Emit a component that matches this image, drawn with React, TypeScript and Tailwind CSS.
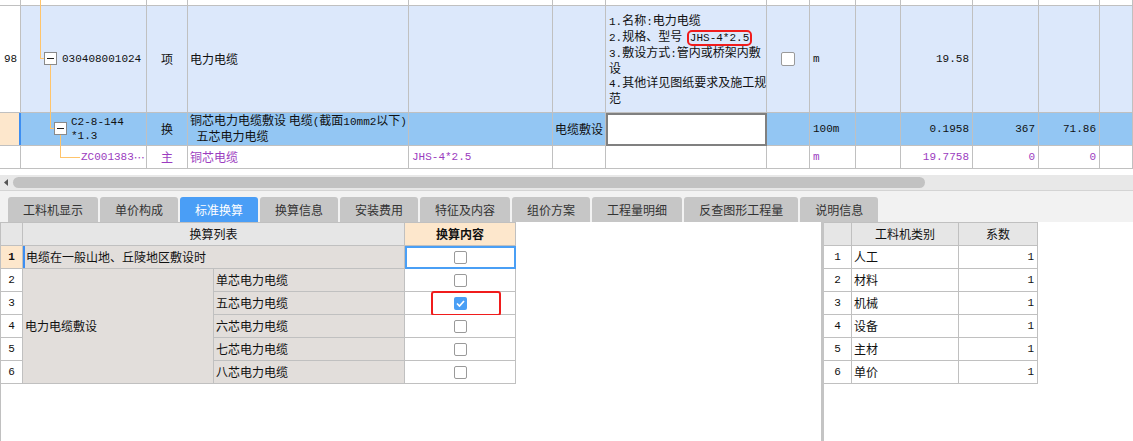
import React from "react";

// grid line colour and a few palette values used throughout
const LINE = "border-[#c0c0c0]";

const M = ({ children, className = "" }: { children: React.ReactNode; className?: string }) => (
  <span className={`font-['Liberation_Mono',monospace] text-[11px] ${className}`}>{children}</span>
);

const Check = ({ checked = false }: { checked?: boolean }) =>
  checked ? (
    <span className="flex h-[13px] w-[13px] items-center justify-center rounded-[2px] bg-[#4a9ff5]">
      <svg width="9" height="7" viewBox="0 0 9 7">
        <path d="M1 3.5 L3.5 6 L8 1" stroke="#fff" strokeWidth="1.7" fill="none" />
      </svg>
    </span>
  ) : (
    <span className="h-[13px] w-[13px] rounded-[2px] border border-[#9a9a9a] bg-white" />
  );

// plain grid cell with right/bottom grid lines
const C = ({ children, className = "" }: { children?: React.ReactNode; className?: string }) => (
  <div className={`flex items-center whitespace-nowrap border-r border-b ${LINE} ${className}`}>{children}</div>
);

// cell with its own full border (focus / edit state)
const F = ({ children, className = "" }: { children?: React.ReactNode; className?: string }) => (
  <div className={`flex items-center whitespace-nowrap border-2 ${className}`}>{children}</div>
);

const tabs = ["工料机显示", "单价构成", "标准换算", "换算信息", "安装费用", "特征及内容", "组价方案", "工程量明细", "反查图形工程量", "说明信息"];

const subRows = [
  { n: "2", label: "单芯电力电缆", checked: false },
  { n: "3", label: "五芯电力电缆", checked: true },
  { n: "4", label: "六芯电力电缆", checked: false },
  { n: "5", label: "七芯电力电缆", checked: false },
  { n: "6", label: "八芯电力电缆", checked: false },
];

const kinds = ["人工", "材料", "机械", "设备", "主材", "单价"];

export default function App() {
  const blue = "bg-[#dce8fb]";
  const sel = "bg-[#93c6f3]";
  const purple = "text-[#9b3cc0]";

  return (
    <div className="h-[441px] w-[1133px] overflow-hidden bg-white font-['Noto_Sans_CJK_SC',sans-serif] text-[12px] text-[#111]">
      {/* top tree table */}
      <div className="relative">
        <div className="grid grid-cols-[21px_126px_41px_221px_144px_53px_161px_43px_46px_45px_72px_66px_61px_33px] grid-rows-[6px_107px_33px_23px]">
          {Array.from({ length: 14 }).map((_, i) => (
            <C key={i} className="bg-white" />
          ))}

          {/* row 98 */}
          <C className="bg-white pl-[4px]"><M>98</M></C>
          <C className={`${blue} pl-[41px]`}><M>030408001024</M></C>
          <C className={`${blue} justify-center`}>项</C>
          <C className={`${blue} pl-[2px]`}>电力电缆</C>
          <C className={blue} />
          <C className={blue} />
          <C className={`${blue} pl-[3px]`}>
            <div className="flex flex-col leading-[14px]">
              <div><M>1.</M>名称<M>:</M>电力电缆</div>
              <div>
                <M>2.</M>规格、型号<M>{"\u00a0"}</M>
                <M className="rounded-[3px] px-[1px] outline-2 outline-solid outline-[#f01c1c]">JHS-4*2.5</M>
              </div>
              <div><M>3.</M>敷设方式<M>:</M>管内或桥架内敷</div>
              <div>设</div>
              <div><M>4.</M>其他详见图纸要求及施工规</div>
              <div>范</div>
            </div>
          </C>
          <C className={`${blue} justify-center`}>
            <span className="h-[14px] w-[14px] rounded-[2px] border border-[#9a9a9a] bg-white" />
          </C>
          <C className={`${blue} pl-[3px]`}><M>m</M></C>
          <C className={blue} />
          <C className={`${blue} justify-end pr-[3px]`}><M>19.58</M></C>
          <C className={blue} />
          <C className={blue} />
          <C className={blue} />

          {/* selected row */}
          <div className="flex border-b border-[#c0c0c0] bg-[#fde7cc]">
            <div className="ml-auto w-[2px] bg-[#3d8ef2]" />
          </div>
          <C className={`${sel} pl-[50px]`}>
            <div className="flex flex-col leading-[14px]">
              <M>C2-8-144</M>
              <M>*1.3</M>
            </div>
          </C>
          <C className={`${sel} justify-center`}>换</C>
          <C className={`${sel} relative z-10 pl-[2px]`}>
            <div className="flex flex-col leading-[14px]">
              <div>铜芯电力电缆敷设 电缆<M>(</M>截面<M>10mm2</M>以下<M>)</M></div>
              <div><M>{"\u00a0"}</M>五芯电力电缆</div>
            </div>
          </C>
          <C className={sel} />
          <C className={`${sel} pl-[2px]`}>电缆敷设</C>
          <F className="border-[#808080] bg-white" />
          <C className={sel} />
          <C className={`${sel} pl-[3px]`}><M>100m</M></C>
          <C className={sel} />
          <C className={`${sel} justify-end pr-[3px]`}><M>0.1958</M></C>
          <C className={`${sel} justify-end pr-[3px]`}><M>367</M></C>
          <C className={`${sel} justify-end pr-[3px]`}><M>71.86</M></C>
          <C className={sel} />

          {/* main material row */}
          <C />
          <C className={`pl-[60px] ${purple}`}><M>ZC001383</M><span className="text-[11px]">⋯</span></C>
          <C className={`justify-center ${purple}`}>主</C>
          <C className={`pl-[2px] ${purple}`}>铜芯电缆</C>
          <C className={`pl-[3px] ${purple}`}><M>JHS-4*2.5</M></C>
          <C />
          <C />
          <C />
          <C className={`pl-[3px] ${purple}`}><M>m</M></C>
          <C />
          <C className={`justify-end pr-[3px] ${purple}`}><M>19.7758</M></C>
          <C className={`justify-end pr-[3px] ${purple}`}><M>0</M></C>
          <C className={`justify-end pr-[3px] ${purple}`}><M>0</M></C>
          <C />
        </div>

        {/* tree connectors */}
        <svg className="pointer-events-none absolute left-0 top-0" width="147" height="169" shapeRendering="crispEdges">
          <g stroke="#ffc46b" strokeWidth="1" fill="none">
            <path d="M40.5 0 V58.5 H44" />
            <path d="M50.5 64 V128.5 H54" />
            <path d="M60.5 134 V157.5 H80" />
          </g>
          <rect x="44.5" y="52.5" width="12" height="12" fill="#fff" stroke="#8a8a8a" />
          <path d="M47 58.5 H54" stroke="#222" />
          <rect x="54.5" y="122.5" width="12" height="12" fill="#fff" stroke="#8a8a8a" />
          <path d="M57 128.5 H64" stroke="#222" />
        </svg>
      </div>

      {/* horizontal scrollbar */}
      <div className="h-[6px]" />
      <div className="flex h-[15px] items-center bg-[#e8e8e8]">
        <svg className="ml-[4px]" width="4" height="7" viewBox="0 0 4 7">
          <path d="M4 0 L0 3.5 L4 7 Z" fill="#555" />
        </svg>
        <div className="ml-[5px] h-[11px] w-[912px] rounded-full bg-[#c2c2c2]" />
      </div>
      <div className="h-px bg-[#d4d4d4]" />

      {/* tabs */}
      <div className="flex h-[31px] items-end gap-[2px] bg-[#f2f2f2] pl-[8px]">
        {tabs.map((t) => (
          <div
            key={t}
            className={`flex h-[25px] items-center rounded-t-[3px] px-[15px] ${
              t === "标准换算" ? "bg-[#4a9ef6] text-white" : "bg-[#c6c6c6] text-[#333]"
            }`}
          >
            {t}
          </div>
        ))}
      </div>

      {/* bottom panels */}
      <div className="flex h-[219px]">
        <div className={`w-[821px] border-l ${LINE}`}>
          <div className={`grid w-max grid-cols-[22px_191px_191px_111px] grid-rows-[23px_repeat(6,23px)] border-t ${LINE}`}>
            <C className="bg-[#e6e6e6]" />
            <C className="col-span-2 justify-center bg-[#e6e6e6]">换算列表</C>
            <C className="justify-center bg-[#fde7cc] font-bold">换算内容</C>

            <C className="justify-center bg-[#fde7cc] font-bold"><M className="font-bold">1</M></C>
            <div className="col-span-2 flex items-center whitespace-nowrap border-r border-b border-[#c0c0c0] bg-[#e2dedb]">
              <div className="h-full w-[2px] bg-[#3d8ef2]" />
              <span className="pl-[1px]">电缆在一般山地、丘陵地区敷设时</span>
            </div>
            <F className="justify-center border-[#4a9ff5] bg-white"><Check /></F>

            {subRows.map((r, i) => (
              <React.Fragment key={r.n}>
                <C className="justify-center bg-white"><M>{r.n}</M></C>
                {i === 0 && <C className="row-span-5 bg-[#e2dedb] pl-[2px]">电力电缆敷设</C>}
                <C className="bg-[#e2dedb] pl-[2px]">{r.label}</C>
                <C className="relative justify-center bg-white">
                  <Check checked={r.checked} />
                  {r.checked && (
                    <span className="absolute left-[26px] top-[-1px] h-[25px] w-[70px] rounded-[3px] border-2 border-[#f01c1c]" />
                  )}
                </C>
              </React.Fragment>
            ))}
          </div>
        </div>

        <div className="flex-1 border-l-[3px] border-[#c4c4c4]">
          <div className={`grid w-max grid-cols-[28px_107px_79px] grid-rows-[23px_repeat(6,23px)] border-t ${LINE}`}>
            <C className="bg-[#e6e6e6]" />
            <C className="justify-center bg-[#e6e6e6]">工料机类别</C>
            <C className="justify-center bg-[#e6e6e6]">系数</C>
            {kinds.map((k, i) => (
              <React.Fragment key={k}>
                <C className="justify-center"><M>{i + 1}</M></C>
                <C className="pl-[2px]">{k}</C>
                <C className="justify-end pr-[3px]"><M>1</M></C>
              </React.Fragment>
            ))}
          </div>
        </div>
      </div>
    </div>
  );
}
